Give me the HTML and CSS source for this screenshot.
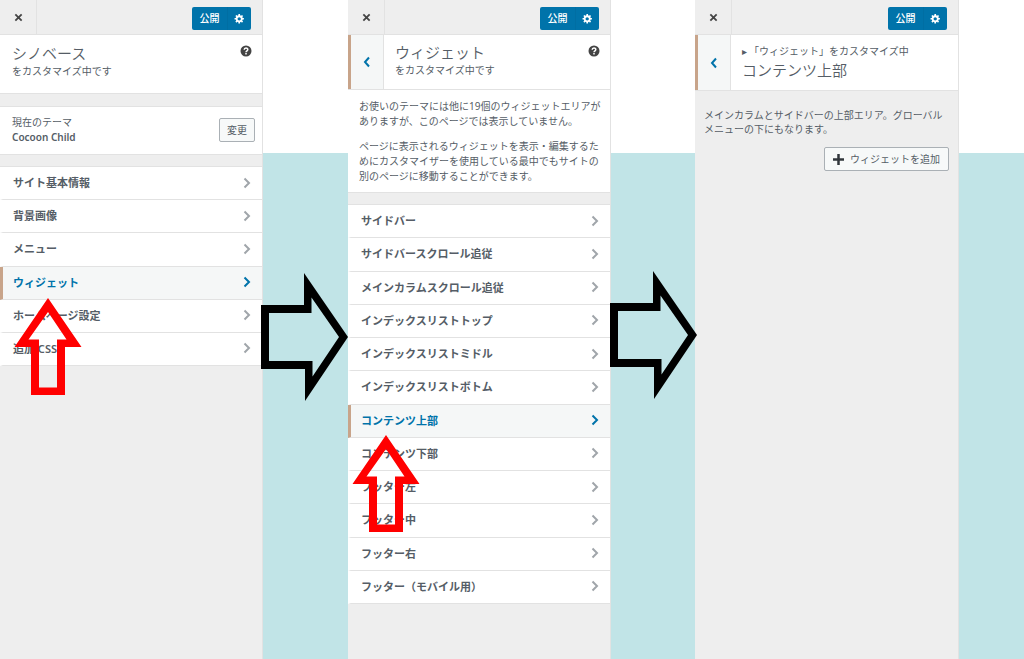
FILE: index.html
```html
<!DOCTYPE html>
<html lang="ja">
<head>
  <meta charset="utf-8">
  <title>カスタマイザー ウィジェットの追加手順</title>
  <link rel="stylesheet" href="styles.css">
</head>
<body>

  <svg class="symbols" aria-hidden="true">
    <symbol id="close" viewBox="0 0 10 10"><path d="M1.500 1.500l7 7M8.500 1.500l-7 7" fill="none" stroke="currentColor" stroke-width="2"/></symbol>
    <symbol id="right" viewBox="0 0 8 12"><path d="M1.500 1.500L6 6l-4.500 4.500" fill="none" stroke="currentColor" stroke-width="2"/></symbol>
    <symbol id="left" viewBox="0 0 8 12"><path d="M6 1.500L2 6l4 4.500" fill="none" stroke="currentColor" stroke-width="2"/></symbol>
    <symbol id="gear" viewBox="0 0 20 20"><path fill="currentColor" fill-rule="evenodd" d="M18 12h-2.180c-.17.700-.440 1.350-.810 1.930l1.540 1.540-2.100 2.100-1.540-1.540c-.580.360-1.230.630-1.910.790V19H8v-2.180c-.680-.160-1.330-.430-1.910-.790l-1.540 1.540-2.120-2.120 1.540-1.540c-.360-.580-.630-1.230-.790-1.910H1V9.030h2.170c.160-.700.440-1.350.800-1.940L2.430 5.550l2.100-2.100 1.540 1.540c.580-.370 1.240-.640 1.930-.810V2h3v2.180c.680.160 1.330.430 1.910.790l1.540-1.540 2.120 2.120-1.540 1.540c.360.590.640 1.240.800 1.940H18V12zM9.500 13.500c1.660 0 3-1.340 3-3s-1.340-3-3-3-3 1.340-3 3 1.340 3 3 3z"/></symbol>
    <symbol id="help" viewBox="0 0 12 12"><circle cx="6" cy="6" r="5.500" fill="currentColor"/><path d="M4.200 4.700c0-2.300 3.600-2.300 3.600-.2C7.800 5.800 6 5.800 6 7.300M6 8.100v1.500" fill="none" stroke="#fff" stroke-width="1.500"/></symbol>
    <symbol id="plus" viewBox="0 0 11 11"><path d="M5.500 0v11M0 5.500h11" fill="none" stroke="currentColor" stroke-width="2.500"/></symbol>
    <symbol id="arrow-up" viewBox="0 0 68 97"><path fill="#f00" fill-rule="evenodd" d="M34 0L67.500 49H51v48H17V49H0.500zM34 14L14.500 41.500H25v48h18v-48h9.500z"/></symbol>
    <symbol id="arrow-right" viewBox="0 0 87 128"><path fill="#000" fill-rule="evenodd" d="M0 32h43V0l44 64-43 64V96H0zM8 40v48h43.500v15.500L78 64 50.500 24.500V40z"/></symbol>
  </svg>

  <main class="steps">

    <section class="panel">
      <div class="topbar">
        <button class="close" aria-label="閉じる"><svg><use href="#close"/></svg></button>
        <div class="publish">
          <button class="save">公開</button>
          <button class="settings" aria-label="公開設定"><svg><use href="#gear"/></svg></button>
        </div>
      </div>
      <header class="site-info">
        <div class="heading">
          <h1>シノベース</h1>
          <p>をカスタマイズ中です</p>
        </div>
        <button class="help" aria-label="ヘルプ"><svg><use href="#help"/></svg></button>
      </header>
      <div class="theme">
        <div>
          <p>現在のテーマ</p>
          <p class="theme-name">Cocoon Child</p>
        </div>
        <button class="button">変更</button>
      </div>
      <ul class="list">
        <li><a href="#">サイト基本情報<svg><use href="#right"/></svg></a></li>
        <li><a href="#">背景画像<svg><use href="#right"/></svg></a></li>
        <li><a href="#">メニュー<svg><use href="#right"/></svg></a></li>
        <li><a href="#" class="active">ウィジェット<svg><use href="#right"/></svg></a></li>
        <li><a href="#">ホームページ設定<svg><use href="#right"/></svg></a></li>
        <li><a href="#">追加 CSS<svg><use href="#right"/></svg></a></li>
      </ul>
      <svg class="pointer pointer-root"><use href="#arrow-up"/></svg>
    </section>

    <div class="gap"><svg class="next next-first"><use href="#arrow-right"/></svg></div>

    <section class="panel">
      <div class="topbar">
        <button class="close" aria-label="閉じる"><svg><use href="#close"/></svg></button>
        <div class="publish">
          <button class="save">公開</button>
          <button class="settings" aria-label="公開設定"><svg><use href="#gear"/></svg></button>
        </div>
      </div>
      <header class="section-title">
        <button class="back" aria-label="戻る"><svg><use href="#left"/></svg></button>
        <div class="heading">
          <h2>ウィジェット</h2>
          <p>をカスタマイズ中です</p>
        </div>
        <button class="help" aria-label="ヘルプ"><svg><use href="#help"/></svg></button>
      </header>
      <div class="notice">
        <p>お使いのテーマには他に19個のウィジェットエリアがありますが、このページでは表示していません。</p>
        <p>ページに表示されるウィジェットを表示・編集するためにカスタマイザーを使用している最中でもサイトの別のページに移動することができます。</p>
      </div>
      <ul class="list list-long">
        <li><a href="#">サイドバー<svg><use href="#right"/></svg></a></li>
        <li><a href="#">サイドバースクロール追従<svg><use href="#right"/></svg></a></li>
        <li><a href="#">メインカラムスクロール追従<svg><use href="#right"/></svg></a></li>
        <li><a href="#">インデックスリストトップ<svg><use href="#right"/></svg></a></li>
        <li><a href="#">インデックスリストミドル<svg><use href="#right"/></svg></a></li>
        <li><a href="#">インデックスリストボトム<svg><use href="#right"/></svg></a></li>
        <li><a href="#" class="active">コンテンツ上部<svg><use href="#right"/></svg></a></li>
        <li><a href="#">コンテンツ下部<svg><use href="#right"/></svg></a></li>
        <li><a href="#">フッター左<svg><use href="#right"/></svg></a></li>
        <li><a href="#">フッター中<svg><use href="#right"/></svg></a></li>
        <li><a href="#">フッター右<svg><use href="#right"/></svg></a></li>
        <li><a href="#">フッター（モバイル用）<svg><use href="#right"/></svg></a></li>
      </ul>
      <svg class="pointer pointer-widgets"><use href="#arrow-up"/></svg>
    </section>

    <div class="gap"><svg class="next next-second"><use href="#arrow-right"/></svg></div>

    <section class="panel">
      <div class="topbar">
        <button class="close" aria-label="閉じる"><svg><use href="#close"/></svg></button>
        <div class="publish">
          <button class="save">公開</button>
          <button class="settings" aria-label="公開設定"><svg><use href="#gear"/></svg></button>
        </div>
      </div>
      <header class="section-title">
        <button class="back" aria-label="戻る"><svg><use href="#left"/></svg></button>
        <div class="heading breadcrumb">
          <p><span class="marker">▸</span>「ウィジェット」をカスタマイズ中</p>
          <h2>コンテンツ上部</h2>
        </div>
      </header>
      <div class="area">
        <p>メインカラムとサイドバーの上部エリア。グローバルメニューの下にもなります。</p>
        <button class="button add"><svg><use href="#plus"/></svg>ウィジェットを追加</button>
      </div>
    </section>

  </main>

</body>
</html>
```

FILE: styles.css
```css
* {
  box-sizing: border-box;
}

body {
  margin: 0;
  font-family: "Noto Sans", "Noto Sans CJK JP", sans-serif;
  font-size: 10px;
  line-height: 15px;
  color: #555d66;
  background: linear-gradient(#fff 153px, #c1e4e7 153px);
}

h1, h2, p, ul {
  margin: 0;
  padding: 0;
}

h1, h2 {
  font-size: 15px;
  line-height: 22px;
  font-weight: 350;
}

button {
  font: inherit;
  color: inherit;
  padding: 0;
  border: none;
  background: none;
  cursor: pointer;
}

svg {
  display: block;
}

.symbols {
  position: absolute;
  width: 0;
  height: 0;
}

.steps {
  display: grid;
  grid-template-columns: 263fr 85fr 263fr 84fr 264fr 65fr;
  min-height: 100vh;
}

.panel {
  position: relative;
  min-width: 0;
  background: #eee;
  border-right: 1px solid #e2e2e2;
}

.gap {
  position: relative;
}

/* top bar */

.topbar {
  display: flex;
  justify-content: space-between;
  align-items: center;
  height: 35px;
  padding-right: 11px;
  border-bottom: 1px solid #e2e2e2;
}

.close {
  display: flex;
  align-items: center;
  justify-content: center;
  align-self: stretch;
  width: 37px;
  color: #444;
  border-right: 1px solid #e2e2e2;
}

.close svg {
  width: 9px;
  height: 9px;
}

.publish {
  display: flex;
  height: 23px;
  margin-top: 2px;
  color: #fff;
  background: #0073aa;
  border-radius: 2px;
}

.save {
  width: 35px;
  font-weight: 500;
}

.settings {
  display: flex;
  align-items: center;
  justify-content: center;
  width: 24px;
  border-left: 1px solid #006ea3;
}

.settings svg {
  width: 11px;
  height: 11px;
}

/* headers */

.site-info,
.section-title {
  display: flex;
  background: #fff;
  border-bottom: 1px solid #e2e2e2;
}

.site-info {
  padding: 7px 0 14px 12px;
}

.heading {
  flex: 1;
}

.help {
  align-self: flex-start;
  margin-right: 10px;
  color: #444;
}

.help svg {
  width: 12px;
  height: 12px;
}

.site-info .help {
  margin-top: 3px;
}

.section-title .help {
  margin-top: 10px;
}

.section-title .heading {
  padding: 6px 0 11px 11px;
}

.section-title .breadcrumb {
  padding: 9px 0 9px 11px;
}

.back {
  display: flex;
  align-items: center;
  justify-content: center;
  width: 36px;
  color: #0073aa;
  background: #f5f7f7;
  border-left: 3px solid #c8a48a;
  border-right: 1px solid #e2e2e2;
}

.back svg {
  width: 8px;
  height: 12px;
}

.marker {
  display: inline-block;
  width: 7px;
}

/* current theme */

.theme {
  display: flex;
  align-items: center;
  justify-content: space-between;
  margin-top: 12px;
  padding: 8px 7px 9px 12px;
  background: #fff;
  border-top: 1px solid #e2e2e2;
  border-bottom: 1px solid #e2e2e2;
}

.theme-name {
  font-weight: 600;
}

.button {
  height: 24px;
  padding: 0 7px;
  background: #f7f9f9;
  border: 1px solid #aab0b5;
  border-radius: 2px;
}

/* lists */

.list {
  display: grid;
  grid-auto-rows: 1fr;
  min-height: 200px;
  margin-top: 11px;
  list-style: none;
  border-top: 1px solid #e2e2e2;
}

.list-long {
  min-height: 400px;
}

.list a {
  display: flex;
  align-items: center;
  justify-content: space-between;
  height: 100%;
  padding: 0 11px 1px 10px;
  font-size: 11px;
  font-weight: 600;
  color: #555d66;
  text-decoration: none;
  background: #fff;
  border-left: 3px solid #fff;
  border-bottom: 1px solid #e2e2e2;
}

.list svg {
  width: 8px;
  height: 12px;
  color: #a0a5aa;
}

.list .active {
  color: #0073aa;
  background: #f5f7f7;
  border-left-color: #c8a48a;
}

.list .active svg {
  color: #0073aa;
}

/* text */

.notice {
  padding: 9px 7px 8px 11px;
  background: #fff;
  border-bottom: 1px solid #e2e2e2;
}

.notice p + p {
  margin-top: 10px;
}

.area {
  padding: 17px 9px;
}

.area p {
  line-height: 14px;
}

.add {
  display: flex;
  align-items: center;
  gap: 6px;
  padding: 0 8px;
  margin: 11px 0 0 auto;
}

.add svg {
  width: 11px;
  height: 11px;
  color: #32373c;
}

/* arrows drawn over the panels */

.pointer {
  position: absolute;
  width: 68px;
  height: 97px;
}

.pointer-root {
  top: 298px;
  left: 14px;
}

.pointer-widgets {
  top: 435px;
  left: 4px;
}

.next {
  position: absolute;
  z-index: 1;
  width: 87px;
  height: 128px;
}

.next-first {
  top: 273px;
  left: -2px;
}

.next-second {
  top: 271px;
  left: -1px;
}
```
